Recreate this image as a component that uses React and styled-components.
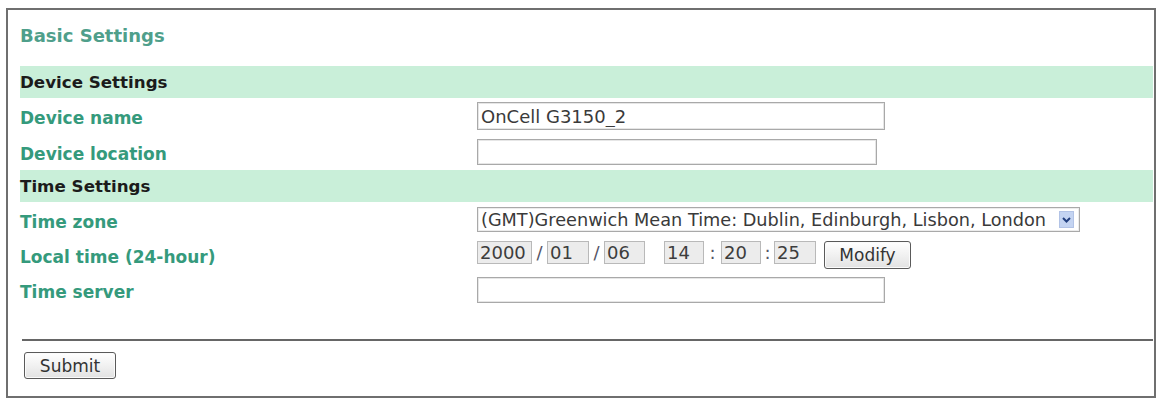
import React from "react";
import styled, { createGlobalStyle } from "styled-components";

const GlobalStyle = createGlobalStyle`
  html, body {
    margin: 0;
    padding: 0;
    background: #ffffff;
  }
  body {
    font-family: "DejaVu Sans", Verdana, sans-serif;
  }
`;

const Panel = styled.div`
  margin: 8px 3px 3px 6px;
  border: 2px solid #6f6f6f;
  padding: 0 1px 17px 12px;
  background: #fff;
`;

const Title = styled.div`
  height: 50px;
  margin-bottom: 6px;
  display: flex;
  align-items: center;
  font-size: 18px;
  font-weight: bold;
  color: #4f9f8b;
`;

const Rows = styled.div`
  display: flex;
  flex-direction: column;
`;

const Band = styled.div`
  height: 32px;
  display: flex;
  align-items: center;
  background: #c9efd9;
  font-size: 16.7px;
  font-weight: bold;
  color: #1b1b1b;
`;

const Row = styled.div`
  display: grid;
  grid-template-columns: 457px 1fr;
  align-items: center;
  height: ${(p) => p.$h || 35}px;
`;

const Label = styled.div`
  padding-top: 4px;
  font-size: 17px;
  font-weight: bold;
  color: #359a7c;
`;

const Field = styled.div`
  display: flex;
  align-items: center;
`;

const TimeField = styled.div`
  display: flex;
  align-items: flex-start;
  height: 28px;
`;

const TextInput = styled.input`
  box-sizing: border-box;
  width: ${(p) => p.$w}px;
  height: ${(p) => p.$h}px;
  border: 1px solid #a9a9a9;
  box-shadow: inset 0 0 0 1px #e6e6e6;
  padding: 0 3px;
  font-family: "DejaVu Sans", Verdana, sans-serif;
  font-size: 18px;
  color: #3a3a3a;
  background: #fff;
  outline: none;
`;

const SelectBox = styled.div`
  box-sizing: border-box;
  width: 603px;
  height: 25px;
  border: 1px solid #a9a9a9;
  box-shadow: inset 0 0 0 1px #ececec;
  display: flex;
  align-items: center;
  justify-content: space-between;
  padding: 0 5px 0 3px;
  font-size: 17.7px;
  color: #3a3a3a;
  white-space: nowrap;
`;

const ArrowBox = styled.span`
  box-sizing: border-box;
  width: 15px;
  height: 17px;
  background: #c4d4f2;
  border: 1px solid #b2c3e6;
  display: flex;
  align-items: center;
  justify-content: center;
`;

const TimeBox = styled.span`
  box-sizing: border-box;
  width: ${(p) => p.$w}px;
  height: 23px;
  margin-right: ${(p) => p.$gap || 0}px;
  border: 1px solid #b9b9b9;
  background: #ececec;
  padding-left: 2px;
  display: flex;
  align-items: center;
  font-size: 18px;
  color: #3d3d3d;
`;

const Sep = styled.span`
  width: ${(p) => p.$w}px;
  height: 23px;
  display: flex;
  align-items: center;
  justify-content: center;
  font-size: 18px;
  color: #556;
`;

const Button = styled.button`
  box-sizing: border-box;
  width: ${(p) => p.$w}px;
  height: ${(p) => p.$h}px;
  margin-left: ${(p) => p.$ml || 0}px;
  border: 1px solid #5a5a5a;
  border-radius: 3px;
  background: linear-gradient(#ffffff, #f1f1f1 50%, #e2e2e2);
  box-shadow: inset 0 0 0 1px #fbfbfb;
  font-family: "DejaVu Sans", Verdana, sans-serif;
  font-size: 17px;
  color: #333;
  padding: 0;
  cursor: pointer;
`;

const Divider = styled.hr`
  margin: 32px 0 0 2px;
  border: none;
  border-top: 2px solid #666;
  height: 0;
`;

const Footer = styled.div`
  padding: 11px 0 0 4px;
  display: flex;
`;

function Chevron() {
  return (
    <svg width="9" height="6" viewBox="0 0 9 6">
      <path d="M1 1 L4.5 4.5 L8 1" fill="none" stroke="#23407f" strokeWidth="2" />
    </svg>
  );
}

export default function App() {
  return (
    <>
      <GlobalStyle />
      <Panel>
        <Title>Basic Settings</Title>
        <Rows>
          <Band>Device Settings</Band>
          <Row $h={36}>
            <Label>Device name</Label>
            <Field>
              <TextInput $w={408} $h={28} defaultValue="OnCell G3150_2" />
            </Field>
          </Row>
          <Row $h={36}>
            <Label>Device location</Label>
            <Field>
              <TextInput $w={400} $h={26} defaultValue="" />
            </Field>
          </Row>
          <Band>Time Settings</Band>
          <Row>
            <Label>Time zone</Label>
            <Field>
              <SelectBox>
                <span>(GMT)Greenwich Mean Time: Dublin, Edinburgh, Lisbon, London</span>
                <ArrowBox>
                  <Chevron />
                </ArrowBox>
              </SelectBox>
            </Field>
          </Row>
          <Row>
            <Label>Local time (24-hour)</Label>
            <TimeField>
              <TimeBox $w={55}>2000</TimeBox>
              <Sep $w={15}>/</Sep>
              <TimeBox $w={42}>01</TimeBox>
              <Sep $w={15}>/</Sep>
              <TimeBox $w={41} $gap={19}>06</TimeBox>
              <TimeBox $w={40}>14</TimeBox>
              <Sep $w={17}>:</Sep>
              <TimeBox $w={40}>20</TimeBox>
              <Sep $w={13}>:</Sep>
              <TimeBox $w={42}>25</TimeBox>
              <Button $w={87} $h={28} $ml={8}>Modify</Button>
            </TimeField>
          </Row>
          <Row>
            <Label>Time server</Label>
            <Field>
              <TextInput $w={408} $h={26} defaultValue="" />
            </Field>
          </Row>
        </Rows>
        <Divider />
        <Footer>
          <Button $w={92} $h={27}>Submit</Button>
        </Footer>
      </Panel>
    </>
  );
}
